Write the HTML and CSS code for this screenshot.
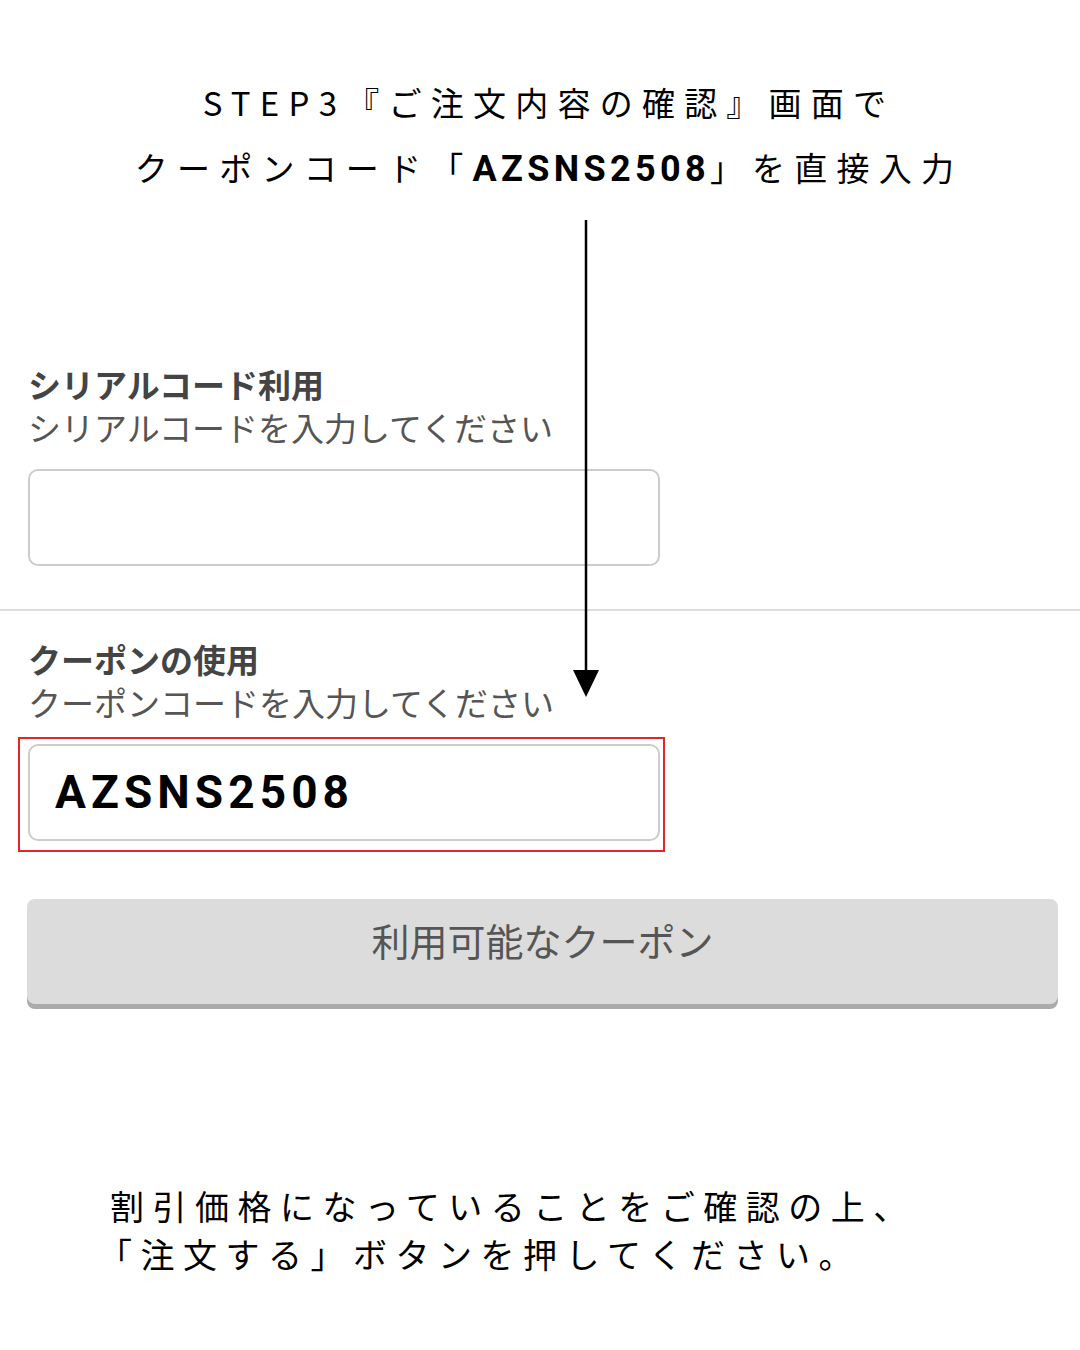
FILE: index.html
```html
<!DOCTYPE html>
<html lang="ja">
<head>
    <meta charset="UTF-8">
    <meta name="viewport" content="width=device-width, initial-scale=1.0">
    <title>クーポンコード入力</title>
    <link rel="stylesheet" href="styles.css">
</head>
<body>
    <div class="page">
        <!-- Step heading -->
        <div class="heading">
            <p>STEP3『ご注文内容の確認』画面で</p>
            <p>クーポンコード「<b class="code">AZSNS2508</b>」を直接入力</p>
        </div>

        <!-- Serial code -->
        <div class="field serial">
            <h2 class="field-title">シリアルコード利用</h2>
            <p class="field-hint">シリアルコードを入力してください</p>
            <div class="input"></div>
        </div>

        <hr class="divider">

        <!-- Coupon -->
        <div class="field coupon">
            <h2 class="field-title">クーポンの使用</h2>
            <p class="field-hint">クーポンコードを入力してください</p>
            <div class="highlight">
                <div class="input filled">AZSNS2508</div>
            </div>
        </div>

        <div class="button-row">
            <button class="coupon-btn">利用可能なクーポン</button>
        </div>

        <div class="note">
            <p>割引価格になっていることをご確認の上、</p>
            <p class="bracket">「注文する」ボタンを押してください。</p>
        </div>

        <!-- Arrow pointing at the coupon field -->
        <svg class="arrow" width="30" height="480" viewBox="0 0 30 480">
            <line x1="15" y1="0" x2="15" y2="460" stroke="#000" stroke-width="2.5"/>
            <path d="M2 450 L28 450 L15 477 Z" fill="#000"/>
        </svg>
    </div>
</body>
</html>
```

FILE: styles.css
```css
body {
    margin: 0;
    background-color: #fff;
    font-family: "Noto Sans CJK JP", "Noto Sans", sans-serif;
    color: #000;
}

p, h2 {
    margin: 0;
}

.page {
    position: relative;
    width: 1080px;
    min-height: 1350px;
}

.heading {
    padding-top: 70px;
    padding-left: 18px;
    text-align: center;
    font-size: 33px;
    line-height: 65px;
    letter-spacing: 0.28em;
    font-weight: 400;
}

.heading .code {
    font-family: Roboto, "Liberation Sans", sans-serif;
    font-weight: 700;
    font-size: 36px;
    letter-spacing: 0.12em;
}

.field {
    padding: 0 28px;
}

.serial {
    margin-top: 161px;
}

.coupon {
    margin-top: 27px;
}

.field-title {
    font-size: 33px;
    line-height: 43px;
    font-weight: 700;
    color: #444;
}

.field-hint {
    font-size: 33px;
    line-height: 43px;
    color: #555;
}

.input {
    box-sizing: border-box;
    width: 632px;
    height: 97px;
    margin-top: 20px;
    border: 2px solid #ccc;
    border-radius: 10px;
    background-color: #fff;
}

.input.filled {
    margin-top: 0;
    padding-left: 25px;
    font-family: Roboto, "Liberation Sans", sans-serif;
    font-size: 46px;
    font-weight: 700;
    line-height: 93px;
    letter-spacing: 0.11em;
    color: #000;
}

.highlight {
    display: inline-block;
    margin-top: 13px;
    margin-left: -10px;
    padding: 5px 3px 9px 8px;
    border: 2px solid #e3262a;
}

.divider {
    margin: 43px 0 0;
    border: none;
    border-top: 2px solid #ddd;
}

.button-row {
    padding: 0 22px 0 27px;
    margin-top: 47px;
}

.coupon-btn {
    display: block;
    width: 100%;
    height: 105px;
    padding: 0 0 24px;
    border: none;
    border-radius: 8px;
    background-color: #dcdcdc;
    box-shadow: 0 5px 0 #ababab;
    font-family: "Noto Sans CJK JP", sans-serif;
    font-size: 38px;
    color: #555;
}

.note {
    margin-top: 178px;
    padding-left: 110px;
    font-size: 34px;
    line-height: 48px;
    letter-spacing: 0.25em;
}

.note .bracket {
    margin-left: -12px;
}

.arrow {
    position: absolute;
    left: 571px;
    top: 220px;
}
```
